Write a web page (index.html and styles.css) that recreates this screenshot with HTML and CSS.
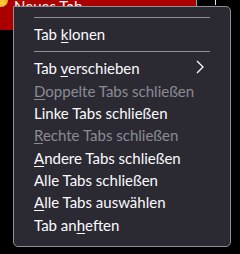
FILE: index.html
```html
<!DOCTYPE html>
<html lang="de">
<head>
<meta charset="utf-8">
<link rel="stylesheet" href="styles.css">
</head>
<body>
<div class="tabstrip">
  <div class="tab">
    <span class="favicon"></span>
    <span class="tab-title">Neues Tab</span>
  </div>
  <span class="tab-accent"></span>
  <span class="tab-divider"></span>
</div>
<div class="menu">
  <div class="sep"></div>
  <div class="item">Tab <u>k</u>lonen</div>
  <div class="sep"></div>
  <div class="item has-sub">Tab <u>v</u>erschieben<svg class="chev" width="8" height="14" viewBox="0 0 8 14"><path d="M1 1 L7 7 L1 13" fill="none" stroke="#fbfbfe" stroke-width="1.3"/></svg></div>
  <div class="item disabled"><u>D</u>oppelte Tabs schließen</div>
  <div class="item">Linke Tabs schließen</div>
  <div class="item disabled"><u>R</u>echte Tabs schließen</div>
  <div class="item"><u>A</u>ndere Tabs schließen</div>
  <div class="item">Alle Tabs schließen</div>
  <div class="item"><u>A</u>lle Tabs auswählen</div>
  <div class="item">Tab an<u>h</u>eften</div>
</div>
</body>
</html>
```
FILE: styles.css
```css
html, body {
  margin: 0;
  padding: 0;
  background: #000;
  width: 240px;
  height: 254px;
  overflow: hidden;
}
body {
  position: relative;
  font-family: "Lato", "Open Sans", sans-serif;
}
.tabstrip {
  display: flex;
  height: 30px;
  background: #000;
}
.tab {
  width: 196px;
  height: 30px;
  background: #ab0000;
  display: flex;
  align-items: flex-start;
  gap: 6px;
}
.favicon {
  width: 14px;
  height: 14px;
  margin-left: -6px;
  margin-top: -7px;
  border-radius: 50%;
  background: radial-gradient(circle at 60% 70%, #ffd640 0%, #ff9a1a 55%, #e5530a 100%);
}
.tab-title {
  color: #fff;
  font-size: 15px;
  line-height: 15px;
  margin-top: -1px;
}
.tab-accent {
  width: 1px;
  height: 6px;
  background: #3fc4c4;
}
.tab-divider {
  width: 1px;
  height: 5px;
  margin-left: 18px;
  background: #e8e8ea;
}
.menu {
  position: absolute;
  left: 13px;
  top: 6px;
  width: 216px;
  height: 234px;
  box-sizing: content-box;
  background: #2b2a33;
  border: 1px solid #8e8e96;
  border-radius: 0 5px 5px 5px;
  padding: 5px 0 0 0;
  color: #fbfbfe;
  font-size: 15px;
}
.sep {
  height: 12px;
  display: flex;
  align-items: flex-start;
}
.sep::before {
  content: "";
  display: block;
  margin: 5px 20px 0 20px;
  height: 1px;
  flex: 1;
  background: #8e8e96;
}
.item {
  position: relative;
  line-height: 20.33px;
  padding: 0 0 2px 20px;
  white-space: nowrap;
}
.item u {
  text-decoration-thickness: 1px;
  text-underline-offset: 2px;
}
.item.disabled {
  color: #8b8b93;
}
.chev {
  position: absolute;
  left: 182px;
  top: 2px;
}
```
